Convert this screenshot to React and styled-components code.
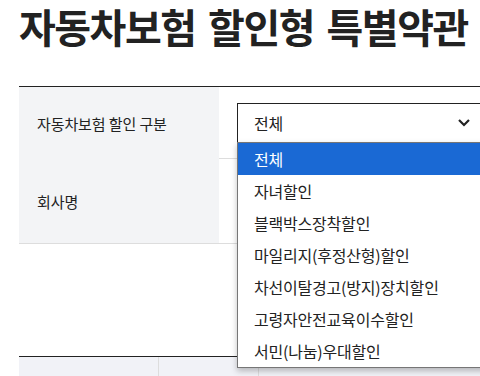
import React from 'react';
import styled, { createGlobalStyle } from 'styled-components';

const options = [
  '전체',
  '자녀할인',
  '블랙박스장착할인',
  '마일리지(후정산형)할인',
  '차선이탈경고(방지)장치할인',
  '고령자안전교육이수할인',
  '서민(나눔)우대할인',
];

export default function App() {
  return (
    <>
      <GlobalStyle />
      <Page>
        <Title>자동차보험 할인형 특별약관</Title>

        <SearchTable>
          <Row height={71}>
            <Label>자동차보험 할인 구분</Label>
            <Value>
              <SelectBox>
                <span>전체</span>
                <Chevron viewBox="0 0 12 8">
                  <polyline points="1,1 6,6 11,1" />
                </Chevron>
                <Menu>
                  {options.map((option, i) => (
                    <MenuItem key={option} active={i === 0}>
                      {option}
                    </MenuItem>
                  ))}
                </Menu>
              </SelectBox>
            </Value>
          </Row>
          <Row height={84}>
            <Label>회사명</Label>
            <Value />
          </Row>
        </SearchTable>

        <ResultTable>
          <HeadCell />
          <HeadCell />
          <HeadCell />
        </ResultTable>
      </Page>
    </>
  );
}

const GlobalStyle = createGlobalStyle`
  body {
    margin: 0;
    overflow: hidden;
    background: #ffffff;
    color: #222222;
    font-family: "Noto Sans CJK KR", "Noto Sans", sans-serif;
  }
`;

const Page = styled('div')`
  width: 720px;
  padding-left: 19px;
`;

const Title = styled('h1')`
  width: max-content;
  margin: 0 0 33px;
  font-size: 40px;
  font-weight: 700;
  line-height: 53px;
  letter-spacing: -1.5px;
  word-spacing: 5px;
  white-space: nowrap;
  color: #222222;
`;

const SearchTable = styled('div')`
  border-top: 1px solid #222222;
`;

const Row = styled('div')`
  display: grid;
  grid-template-columns: 200px 1fr;
  height: ${props => props.height}px;
  border-bottom: 1px solid #dddddd;
`;

const Label = styled('div')`
  display: flex;
  align-items: center;
  padding-left: 18px;
  background: #f3f4f6;
  font-size: 15px;
  letter-spacing: -0.1px;
  color: #222222;
`;

const Value = styled('div')`
  padding: 16px 18px;
`;

const SelectBox = styled('div')`
  position: relative;
  box-sizing: border-box;
  display: flex;
  align-items: center;
  justify-content: space-between;
  width: 250px;
  height: 40px;
  padding: 0 16px;
  border: 1px solid #222222;
  background: #ffffff;
  font-size: 16px;
  letter-spacing: -0.2px;
  z-index: 2;
`;

const Chevron = styled('svg')`
  width: 12px;
  height: 8px;
  fill: none;
  stroke: #222222;
  stroke-width: 2.2;
`;

const Menu = styled('div')`
  position: absolute;
  top: 100%;
  left: -1px;
  width: 250px;
  border: 1px solid #767676;
  background: #ffffff;
  box-shadow: 0 3px 6px rgba(0, 0, 0, 0.25);
`;

const MenuItem = styled('div')`
  height: 32px;
  display: flex;
  align-items: center;
  padding-left: 16px;
  white-space: nowrap;
  font-size: 16px;
  letter-spacing: -0.2px;
  color: ${props => (props.active ? '#ffffff' : '#222222')};
  background: ${props => (props.active ? '#1a69d4' : 'transparent')};
`;

const ResultTable = styled('div')`
  display: grid;
  grid-template-columns: 139px 100px 1fr;
  margin-top: 112px;
  border-top: 1px solid #222222;
`;

const HeadCell = styled('div')`
  height: 40px;
  background: #f1f2f7;
  border-left: 1px solid #dddddd;

  &:first-child {
    border-left: none;
  }
`;
